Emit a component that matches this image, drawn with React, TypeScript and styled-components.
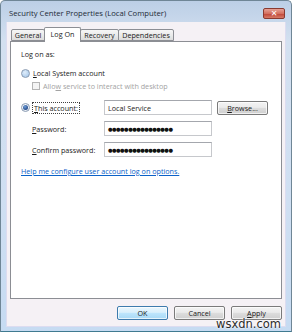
import styled, { createGlobalStyle } from "styled-components"

const FONT = `"Open Sans", "Noto Sans", sans-serif`

const GlobalStyle = createGlobalStyle`
    html, body {
        margin: 0;
        padding: 0;
    }
    body {
        width: 292px;
        height: 332px;
        overflow: hidden;
        font-family: ${FONT};
        font-size: 7.2px;
        color: #1b1b1b;
    }
`

const Window = styled.div`
    position: relative;
    box-sizing: border-box;
    width: 292px;
    height: 332px;
    display: flex;
    flex-direction: column;
    border: 1px solid #6f8696;
    border-bottom-color: #3f7a90;
    border-radius: 5px 5px 0 0;
    padding: 0 5px 4px 5px;
    background: linear-gradient(180deg, #bccfe6 0%, #d3e0f0 12%, #cfdff2 60%, #c6dbf2 100%);
`

const TitleBar = styled.div`
    height: 21px;
    display: flex;
    align-items: center;
    justify-content: space-between;
    padding: 0 1px 0 3px;
`

const Title = styled.div`
    font-size: 7.7px;
    color: #1e2a36;
    padding-top: 2px;
`

const CloseButton = styled.div`
    width: 20px;
    height: 9px;
    margin-top: 4px;
    border: 1px solid #8a3a30;
    border-radius: 2px;
    background: linear-gradient(180deg, #e6a196 0%, #d4705f 50%, #c0483a 55%, #d77a66 100%);
    display: flex;
    align-items: center;
    justify-content: center;
    color: #ffffff;
    font-family: "DejaVu Sans", sans-serif;
    font-weight: bold;
    font-size: 8px;
    line-height: 1;
`

const Client = styled.div`
    flex: 1;
    display: flex;
    flex-direction: column;
    background: #f5f1f5;
    padding: 5px 3px 6px 3px;
    border-left: 1px solid #dcdcf0;
    border-right: 1px solid #dcdcf0;
    border-bottom: 1px solid #dcdcf0;
`

const TabStrip = styled.div`
    display: flex;
    align-items: flex-end;
    height: 14px;
    padding-left: 1px;
    position: relative;
    z-index: 1;
`

const Tab = styled.div<{ $active?: boolean; $w: number }>`
    box-sizing: border-box;
    width: ${(p) => p.$w}px;
    height: ${(p) => (p.$active ? 15 : 12)}px;
    margin-bottom: ${(p) => (p.$active ? -1 : 0)}px;
    display: flex;
    align-items: center;
    justify-content: center;
    padding-bottom: ${(p) => (p.$active ? 2 : 0)}px;
    border: 1px solid #8c8e94;
    border-bottom: ${(p) => (p.$active ? "none" : "1px solid #8c8e94")};
    margin-right: -1px;
    border-radius: 2px 2px 0 0;
    background: ${(p) =>
        p.$active ? "#ffffff" : "linear-gradient(180deg, #f6f6f6 0%, #ebebeb 50%, #dcdcdc 100%)"};
    color: #1b1b1b;
`

const Panel = styled.div`
    flex: 1;
    background: #ffffff;
    border: 1px solid #8c8e94;
    padding: 7px 10px 0 10px;
    display: flex;
    flex-direction: column;
`

const Heading = styled.div`
    height: 10px;
    line-height: 10px;
    margin-bottom: 9px;
`

const OptionRow = styled.div<{ $indent?: number; $disabled?: boolean; $gapTop?: number }>`
    display: flex;
    align-items: center;
    gap: 3px;
    height: 10px;
    margin-top: ${(p) => p.$gapTop ?? 0}px;
    padding-left: ${(p) => p.$indent ?? 0}px;
    color: ${(p) => (p.$disabled ? "#a3a3a3" : "#1b1b1b")};
`

const Radio = styled.span<{ $checked?: boolean }>`
    box-sizing: border-box;
    width: 9px;
    height: 9px;
    border-radius: 50%;
    border: 1px solid #8a9bb2;
    background: ${(p) =>
        p.$checked
            ? "radial-gradient(circle at 40% 35%, #ffffff 0%, #dfe7f1 100%)"
            : "radial-gradient(circle at 40% 35%, #e0eefb 0%, #9fc3e8 100%)"};
    display: flex;
    align-items: center;
    justify-content: center;
    flex-shrink: 0;

    &::after {
        content: "";
        display: ${(p) => (p.$checked ? "block" : "none")};
        width: 5px;
        height: 5px;
        border-radius: 50%;
        background: radial-gradient(circle at 40% 35%, #6f9fd8 0%, #1a3f80 80%);
    }
`

const CheckBox = styled.span`
    box-sizing: border-box;
    width: 8px;
    height: 8px;
    border: 1px solid #b5b5b5;
    background: #f4f4f4;
    flex-shrink: 0;
`

const FocusText = styled.span`
    outline: 1px dotted #404040;
    outline-offset: 0px;
    padding: 0 1px;
`

const AccountGrid = styled.div`
    display: grid;
    grid-template-columns: 78px 108px 51px;
    column-gap: 5px;
    row-gap: 6px;
    margin-top: 9px;
    align-items: center;
`

const FieldLabel = styled.div<{ $indent?: number }>`
    padding-left: ${(p) => p.$indent ?? 0}px;
    display: flex;
    align-items: center;
    gap: 3px;
`

const TextBox = styled.div`
    box-sizing: border-box;
    height: 15px;
    border: 1px solid #c6c8cc;
    border-top-color: #a4a7ad;
    background: #ffffff;
    display: flex;
    align-items: center;
    padding-left: 3px;
    white-space: nowrap;
`

const Dots = styled.span`
    font-family: "DejaVu Sans", sans-serif;
    font-size: 5.2px;
    letter-spacing: -0.5px;
    color: #111111;
`

const Button = styled.div<{ $default?: boolean }>`
    box-sizing: border-box;
    width: 51px;
    height: 14px;
    border: 1px solid ${(p) => (p.$default ? "#3d7bad" : "#7a7a7a")};
    border-radius: 2px;
    background: ${(p) =>
        p.$default
            ? "linear-gradient(180deg, #eaf6fd 0%, #d9f0fc 45%, #bee6fd 50%, #a7d9f5 100%)"
            : "linear-gradient(180deg, #f3f3f3 0%, #ebebeb 45%, #dddddd 50%, #cfcfcf 100%)"};
    box-shadow: inset 0 0 0 1px rgba(255, 255, 255, 0.7);
    display: flex;
    align-items: center;
    justify-content: center;
    color: #1b1b1b;
`

const HelpLink = styled.div`
    margin-top: 9px;
    color: #0b62c8;
    text-decoration: underline;
`

const ButtonRow = styled.div`
    display: flex;
    justify-content: flex-end;
    gap: 6px;
    margin-top: 7px;
`

const Watermark = styled.div`
    position: absolute;
    right: 10px;
    bottom: 0px;
    font-family: "DejaVu Sans", sans-serif;
    font-size: 11.5px;
    color: #2b2b2b;
    text-shadow: 0 0 2px #ffffff, 0 0 2px #ffffff;
    line-height: 14px;
`

const App = () => {
    return (
        <>
            <GlobalStyle />
            <Window>
                <TitleBar>
                    <Title>Security Center Properties (Local Computer)</Title>
                    <CloseButton>✕</CloseButton>
                </TitleBar>
                <Client>
                    <TabStrip>
                        <Tab $w={34}>General</Tab>
                        <Tab $w={37} $active>
                            Log On
                        </Tab>
                        <Tab $w={39}>Recovery</Tab>
                        <Tab $w={56}>Dependencies</Tab>
                    </TabStrip>
                    <Panel>
                        <Heading>Log on as:</Heading>
                        <OptionRow>
                            <Radio />
                            <span>
                                <u>L</u>ocal System account
                            </span>
                        </OptionRow>
                        <OptionRow $indent={11} $disabled $gapTop={3}>
                            <CheckBox />
                            <span>
                                Allo<u>w</u> service to interact with desktop
                            </span>
                        </OptionRow>
                        <AccountGrid>
                            <FieldLabel>
                                <Radio $checked />
                                <FocusText>
                                    <u>T</u>his account:
                                </FocusText>
                            </FieldLabel>
                            <TextBox>Local Service</TextBox>
                            <Button>
                                <span>
                                    <u>B</u>rowse...
                                </span>
                            </Button>
                            <FieldLabel $indent={11}>
                                <span>
                                    <u>P</u>assword:
                                </span>
                            </FieldLabel>
                            <TextBox>
                                <Dots>●●●●●●●●●●●●●●●●</Dots>
                            </TextBox>
                            <div />
                            <FieldLabel $indent={11}>
                                <span>
                                    <u>C</u>onfirm password:
                                </span>
                            </FieldLabel>
                            <TextBox>
                                <Dots>●●●●●●●●●●●●●●●●</Dots>
                            </TextBox>
                            <div />
                        </AccountGrid>
                        <HelpLink>Help me configure user account log on options.</HelpLink>
                    </Panel>
                    <ButtonRow>
                        <Button $default>OK</Button>
                        <Button>Cancel</Button>
                        <Button>
                            <span>
                                <u>A</u>pply
                            </span>
                        </Button>
                    </ButtonRow>
                </Client>
                <Watermark>wsxdn.com</Watermark>
            </Window>
        </>
    )
}

export default App
